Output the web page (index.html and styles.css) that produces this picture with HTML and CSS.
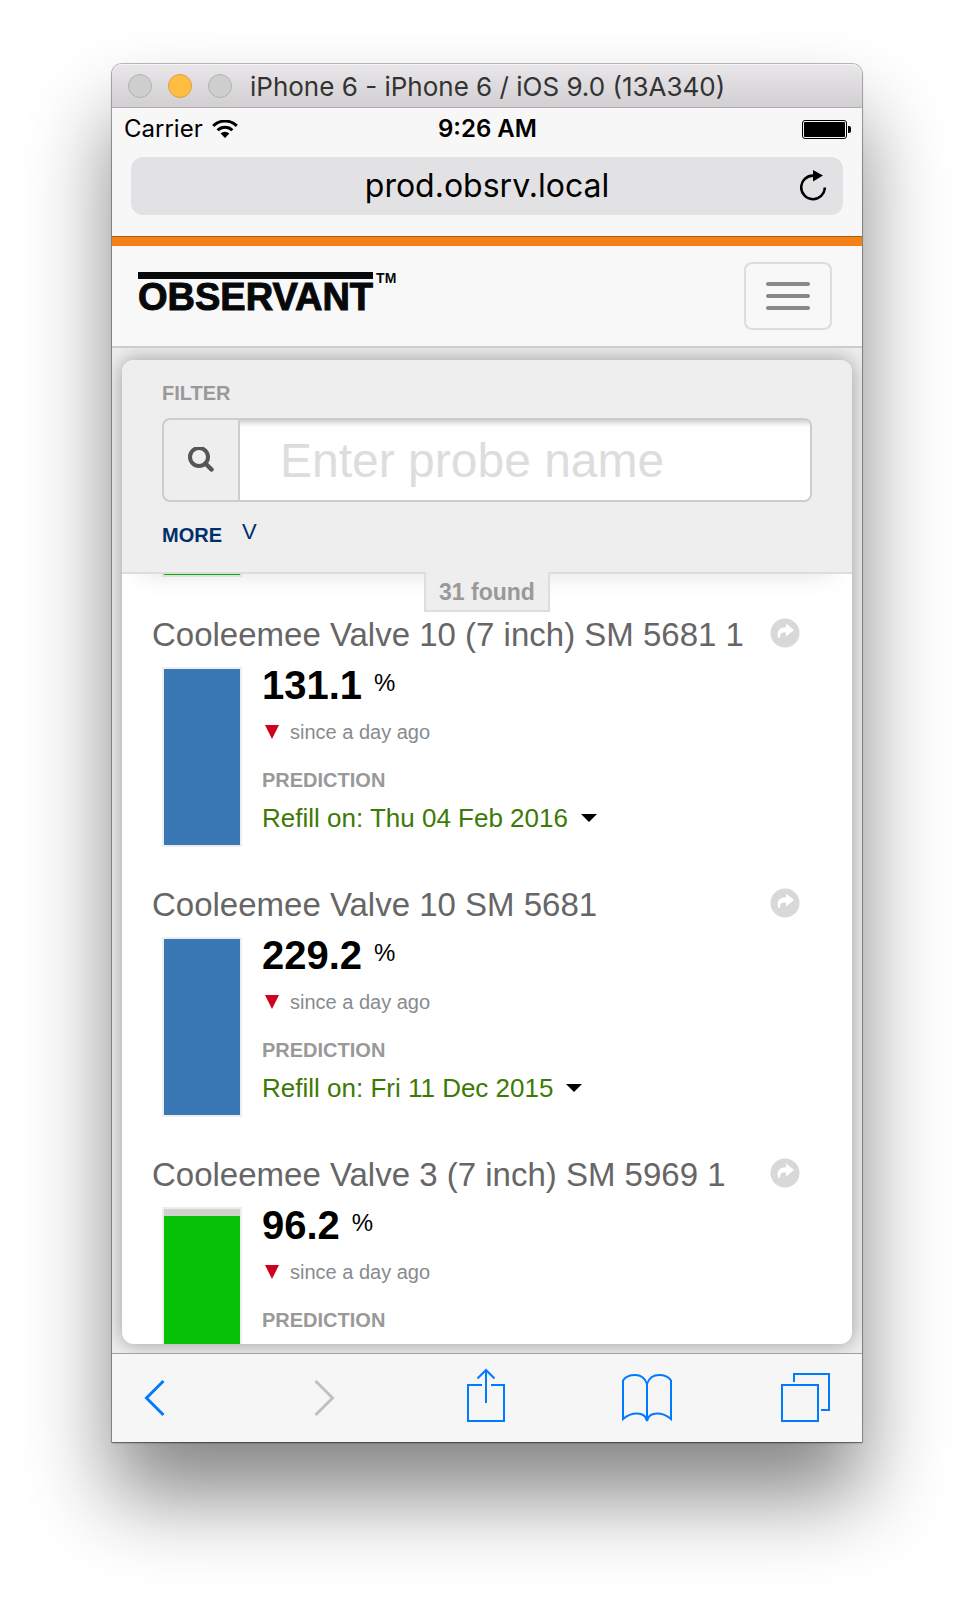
FILE: index.html
```html
<!DOCTYPE html>
<html lang="en">
<head>
  <meta charset="UTF-8">
  <meta name="viewport" content="width=device-width, initial-scale=1.0">
  <title>Observant - Probes</title>
  <link rel="stylesheet" href="styles.css">
</head>
<body>
  <div class="window">
    <div class="titlebar">
      <div class="lights">
        <span class="light"></span>
        <span class="light light-min"></span>
        <span class="light"></span>
      </div>
      <span class="window-title">iPhone 6 - iPhone 6 / iOS 9.0 (13A340)</span>
    </div>

    <div class="statusbar">
      <div class="carrier">
        Carrier
        <svg width="26" height="18" viewBox="0 0 26 18">
          <path d="M1.2 5.8a17 17 0 0 1 23.6 0" fill="none" stroke="#000" stroke-width="3"/>
          <path d="M5.6 10.2a10.6 10.6 0 0 1 14.8 0" fill="none" stroke="#000" stroke-width="3"/>
          <path d="M8.6 13.4a6.4 6.4 0 0 1 8.8 0L13 18z"/>
        </svg>
      </div>
      <span class="clock">9:26 AM</span>
      <svg class="battery" width="49" height="19" viewBox="0 0 49 19">
        <rect x=".5" y=".5" width="44" height="18" rx="2.5" fill="none" stroke="#000"/>
        <rect x="2" y="2" width="41" height="15" rx="1"/>
        <path d="M46 6h1a2 2 0 0 1 2 2v3a2 2 0 0 1-2 2h-1z"/>
      </svg>
    </div>

    <div class="address-bar">
      <input class="address" type="text" value="prod.obsrv.local" aria-label="Address">
      <button class="reload" aria-label="Reload">
        <svg width="26" height="32" viewBox="0 0 26 32">
          <path d="M24.8 17.6A11.8 11.8 0 1 1 13.500 5.600" fill="none" stroke="#000" stroke-width="2.6"/>
          <path d="M13 0l10 5.500-10 6z"/>
        </svg>
      </button>
    </div>

    <header class="navbar">
      <a class="brand" href="#">
        <span class="brand-name">OBSERVANT</span>
        <span class="brand-tm">TM</span>
      </a>
      <button class="navbar-toggle" aria-label="Toggle navigation">
        <span class="icon-bar"></span>
        <span class="icon-bar"></span>
        <span class="icon-bar"></span>
      </button>
    </header>

    <main class="page">
      <div class="panel">
        <form class="filter">
          <label class="label" for="probeName">FILTER</label>
          <div class="input-group">
            <span class="input-addon">
              <svg width="26" height="26" viewBox="0 0 26 26" fill="none" stroke="#555">
                <circle cx="11" cy="10" r="9" stroke-width="4"/>
                <path d="M17.5 16.5l6 6" stroke-width="4.5" stroke-linecap="round"/>
              </svg>
            </span>
            <input id="probeName" type="text" placeholder="Enter probe name">
          </div>
          <a class="more" href="#">MORE <span class="more-arrow">V</span></a>
          <div class="found">31 found</div>
        </form>

        <div class="probe-list">
          <div class="tank tank-tail"><div class="tank-fill green"></div></div>

          <section class="probe">
            <div class="probe-head">
              <h2>Cooleemee Valve 10 (7 inch) SM 5681 1</h2>
              <button class="share" aria-label="Open probe">
                <svg width="30" height="30" viewBox="0 0 30 30">
                  <circle cx="15" cy="15" r="14.5" fill="#d8d8d8"/>
                  <path d="M16 5.5l8 6.500-8 6.500v-4c-4-.3-6 .5-6 5.500H8.500C6 14 9 9.200 16 9.200z" fill="#fff"/>
                </svg>
              </button>
            </div>
            <div class="probe-body">
              <div class="tank"><div class="tank-fill blue" style="height: 100%"></div></div>
              <div class="details">
                <p class="reading"><strong>131.1</strong><span class="unit">%</span></p>
                <p class="trend">
                  <svg width="14" height="14" viewBox="0 0 14 14"><path d="M0 0h14L7 14z" fill="#d0021b"/></svg>
                  since a day ago
                </p>
                <p class="label">PREDICTION</p>
                <button class="refill">Refill on: Thu 04 Feb 2016 <span class="caret"></span></button>
              </div>
            </div>
          </section>

          <section class="probe">
            <div class="probe-head">
              <h2>Cooleemee Valve 10 SM 5681</h2>
              <button class="share" aria-label="Open probe">
                <svg width="30" height="30" viewBox="0 0 30 30">
                  <circle cx="15" cy="15" r="14.5" fill="#d8d8d8"/>
                  <path d="M16 5.5l8 6.500-8 6.500v-4c-4-.3-6 .5-6 5.500H8.500C6 14 9 9.200 16 9.200z" fill="#fff"/>
                </svg>
              </button>
            </div>
            <div class="probe-body">
              <div class="tank"><div class="tank-fill blue" style="height: 100%"></div></div>
              <div class="details">
                <p class="reading"><strong>229.2</strong><span class="unit">%</span></p>
                <p class="trend">
                  <svg width="14" height="14" viewBox="0 0 14 14"><path d="M0 0h14L7 14z" fill="#d0021b"/></svg>
                  since a day ago
                </p>
                <p class="label">PREDICTION</p>
                <button class="refill">Refill on: Fri 11 Dec 2015 <span class="caret"></span></button>
              </div>
            </div>
          </section>

          <section class="probe">
            <div class="probe-head">
              <h2>Cooleemee Valve 3 (7 inch) SM 5969 1</h2>
              <button class="share" aria-label="Open probe">
                <svg width="30" height="30" viewBox="0 0 30 30">
                  <circle cx="15" cy="15" r="14.5" fill="#d8d8d8"/>
                  <path d="M16 5.5l8 6.500-8 6.500v-4c-4-.3-6 .5-6 5.500H8.500C6 14 9 9.200 16 9.200z" fill="#fff"/>
                </svg>
              </button>
            </div>
            <div class="probe-body">
              <div class="tank"><div class="tank-fill green" style="height: 96.2%"></div></div>
              <div class="details">
                <p class="reading"><strong>96.2</strong><span class="unit">%</span></p>
                <p class="trend">
                  <svg width="14" height="14" viewBox="0 0 14 14"><path d="M0 0h14L7 14z" fill="#d0021b"/></svg>
                  since a day ago
                </p>
                <p class="label">PREDICTION</p>
              </div>
            </div>
          </section>
        </div>
      </div>
    </main>

    <nav class="toolbar">
      <button aria-label="Back">
        <svg width="50" height="54" viewBox="0 0 50 54"><path class="chevron" d="M19.5 13L2.500 30l17 17"/></svg>
      </button>
      <button class="off" aria-label="Forward" disabled>
        <svg width="50" height="54" viewBox="0 0 50 54"><path class="chevron" d="M12.5 13l17 17-17 17"/></svg>
      </button>
      <button aria-label="Share">
        <svg width="50" height="54" viewBox="0 0 50 54"><path d="M19 17H5v36h36V17H28M23 35V3M14.500 10.500L23 2l8.500 8.500"/></svg>
      </button>
      <button aria-label="Bookmarks">
        <svg width="50" height="54" viewBox="0 0 50 54"><path d="M25 53V16C23 10 18.500 7 13 7S3 9.500 1 12.500V51c4-3.500 9-5.500 14-5.500S24 48 25 53c1-5 5-7.500 10-7.500S45 47.500 49 51V12.500C47 9.500 42.500 7 37 7S27 10 25 16"/></svg>
      </button>
      <button aria-label="Tabs">
        <svg width="50" height="54" viewBox="0 0 50 54"><path d="M1 17h36v36H1zM13 14V6h35v36h-8"/></svg>
      </button>
    </nav>
  </div>
</body>
</html>
```
FILE: styles.css
```css
* {
  box-sizing: border-box;
}

body {
  margin: 0;
  height: 100vh;
  padding: 64px 112px 160px;
  background: #fff;
  color: #000;
  font-family: "Liberation Sans", Arial, sans-serif;
}

h2, p {
  margin: 0;
  font-weight: normal;
}

button {
  padding: 0;
  border: none;
  background: none;
  font-family: inherit;
  cursor: pointer;
}

svg {
  display: block;
}

.window {
  height: 100%;
  display: flex;
  flex-direction: column;
  border-radius: 10px 10px 0 0;
  background: #f7f7f7;
  box-shadow: 0 0 0 1px rgba(0, 0, 0, 0.25), 0 1px 2px rgba(0, 0, 0, 0.4), 0 54px 84px rgba(0, 0, 0, 0.48);
}

/* Simulator window chrome */
.titlebar {
  display: flex;
  align-items: center;
  gap: 18px;
  height: 44px;
  padding: 0 16px;
  border-bottom: 1px solid #b1adb1;
  border-radius: 10px 10px 0 0;
  background: linear-gradient(#e9e7e9, #d1cfd1);
  box-shadow: inset 0 1px 0 #f5f4f5;
}

.lights {
  display: flex;
  gap: 16px;
}

.light {
  width: 24px;
  height: 24px;
  border: 1px solid #b3b3b3;
  border-radius: 50%;
  background: #cecece;
}

.light-min {
  border-color: #e09e3e;
  background: #ffbd42;
}

.window-title {
  padding-top: 2px;
  font: 26px/32px Inter, sans-serif;
  color: #333;
  white-space: nowrap;
}

.statusbar {
  display: grid;
  grid-template-columns: 1fr auto 1fr;
  align-items: center;
  height: 42px;
  padding: 0 11px 0 12px;
  font: 24px/30px Inter, sans-serif;
}

.carrier {
  display: flex;
  align-items: center;
  gap: 9px;
}

.clock {
  font-weight: 600;
}

.battery {
  justify-self: end;
}

.address-bar {
  display: flex;
  align-items: center;
  height: 58px;
  margin: 7px 19px 21px;
  padding-right: 17px;
  border-radius: 12px;
  background: #e2e2e4;
}

.address {
  flex: 1;
  min-width: 0;
  height: 58px;
  padding: 0 0 2px 43px;
  border: none;
  background: none;
  color: #000;
  font: 32px Inter, sans-serif;
  text-align: center;
}

/* Site header */
.navbar {
  display: flex;
  justify-content: space-between;
  align-items: flex-start;
  margin-top: 1px;
  padding: 16px 30px 16px 26px;
  border-top: 9px solid #f58015;
  border-bottom: 2px solid #ccc;
  background: #f8f8f8;
  box-shadow: 0 -1px 0 #a65c17;
}

.brand {
  display: flex;
  gap: 3px;
  margin-top: 10px;
  color: #06080a;
  font-weight: bold;
  text-decoration: none;
}

.brand-name {
  border-top: 7px solid #06080a;
  font-size: 38px;
  line-height: 36px;
  -webkit-text-stroke: 1px #06080a;
}

.brand-tm {
  font-size: 14px;
  line-height: 12px;
}

.navbar-toggle {
  display: flex;
  flex-direction: column;
  gap: 8px;
  padding: 18px 20px;
  border: 2px solid #ddd;
  border-radius: 8px;
}

.icon-bar {
  width: 44px;
  height: 4px;
  border-radius: 2px;
  background: #888;
}

/* Probe panel */
.page {
  flex: 1;
  min-height: 0;
  padding: 12px 10px 9px;
  overflow: hidden;
  background: #eee;
}

.panel {
  height: 100%;
  display: flex;
  flex-direction: column;
  overflow: hidden;
  border-radius: 12px;
  background: #fff;
  box-shadow: 0 0 20px rgba(0, 0, 0, 0.35);
}

.filter {
  position: relative;
  z-index: 1;
  padding: 21px 40px 25px;
  border-bottom: 2px solid #ddd;
  background: #eee;
  box-shadow: 0 20px 24px -20px rgba(0, 0, 0, 0.12);
}

.label {
  display: block;
  color: #999;
  font-size: 20px;
  line-height: 24px;
  font-weight: bold;
}

.input-group {
  display: flex;
  height: 84px;
  margin: 13px 0 21px;
  border: 2px solid #ccc;
  border-radius: 8px;
  overflow: hidden;
}

.input-addon {
  display: flex;
  justify-content: center;
  align-items: center;
  width: 76px;
  border-right: 2px solid #ccc;
}

.input-group input {
  flex: 1;
  min-width: 0;
  padding: 0 40px;
  border: none;
  background: #fff;
  box-shadow: inset 0 8px 6px -6px rgba(0, 0, 0, 0.25);
  color: #555;
  font: 48px "Liberation Sans", Arial, sans-serif;
}

.input-group input::placeholder {
  color: #ddd;
}

.more {
  display: flex;
  gap: 20px;
  color: #00306b;
  font-size: 20px;
  line-height: 24px;
  font-weight: bold;
  text-decoration: none;
}

.more-arrow {
  font-size: 22px;
  line-height: 18px;
  font-weight: normal;
}

.found {
  position: absolute;
  top: 100%;
  left: 50%;
  transform: translateX(-50%);
  height: 40px;
  padding: 0 13px;
  border: 2px solid #ddd;
  border-top: none;
  background: #eee;
  color: #999;
  font-size: 23px;
  line-height: 40px;
  font-weight: bold;
  white-space: nowrap;
}

.probe-list {
  flex: 1;
  min-height: 0;
  padding: 0 52px 0 30px;
  overflow: hidden;
}

.probe {
  margin-top: 38px;
}

.probe-head {
  display: flex;
  justify-content: space-between;
  align-items: center;
  height: 40px;
}

.probe-head h2 {
  color: #666;
  font-size: 33px;
  line-height: 40px;
  white-space: nowrap;
}

.share {
  margin-bottom: 4px;
}

.probe-body {
  display: flex;
  gap: 20px;
  margin-top: 12px;
  padding-left: 10px;
}

.tank {
  display: flex;
  align-items: flex-end;
  width: 80px;
  height: 180px;
  border: 2px solid #eee;
  background: #d0d2cd;
}

.tank-fill {
  width: 100%;
}

.blue { background: #3a77b5; }
.green { background: #06c106; }

/* bottom edge of the probe scrolled under the filter */
.tank-tail {
  height: 3px;
  margin-left: 10px;
  border-top: none;
}

.tank-tail .tank-fill {
  height: 1px;
}

.reading {
  display: flex;
  gap: 12px;
  line-height: 36px;
}

.reading strong {
  font-size: 40px;
}

.unit {
  font-size: 24px;
  line-height: 32px;
}

.trend {
  display: flex;
  align-items: center;
  gap: 11px;
  margin: 17px 0 24px;
  padding-left: 3px;
  color: #868b90;
  font-size: 20px;
  line-height: 24px;
}

.refill {
  display: flex;
  align-items: center;
  gap: 13px;
  margin-top: 12px;
  color: #3d7a05;
  font-size: 26px;
  line-height: 28px;
}

.caret {
  border: 8px solid transparent;
  border-top-color: #000;
  border-bottom: none;
}

/* Browser toolbar */
.toolbar {
  display: flex;
  justify-content: space-between;
  align-items: flex-start;
  height: 89px;
  padding: 14px 31px 0 32px;
  border-top: 1px solid #a0a0a0;
  background: #f6f6f6;
}

.toolbar path {
  fill: none;
  stroke: #007aff;
  stroke-width: 2;
}

.toolbar .chevron {
  stroke-width: 3;
}

.toolbar .off path {
  stroke: #c0c0c0;
}
```
